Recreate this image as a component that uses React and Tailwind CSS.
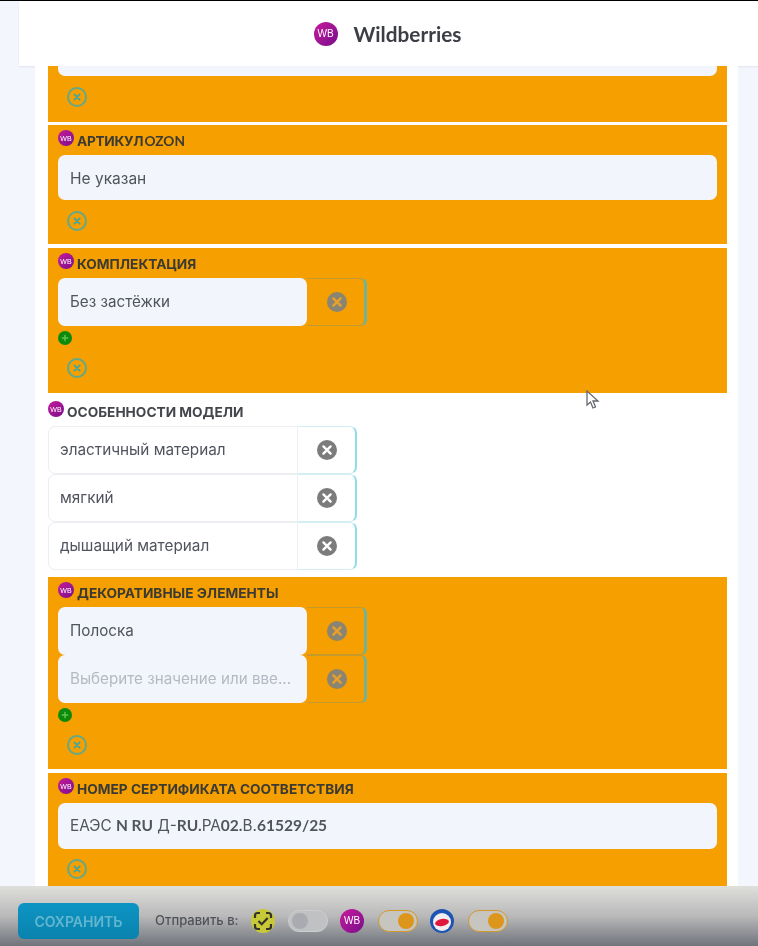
import React from "react";

function WbIcon({ size = 16, fs = 7 }) {
  return (
    <span
      className="inline-flex shrink-0 items-center justify-center rounded-full bg-gradient-to-br from-[#c8189a] to-[#7a0a8c] font-['Liberation_Sans',sans-serif] font-normal text-white"
      style={{ width: size, height: size, fontSize: fs, lineHeight: 1 }}
    >
      WB
    </span>
  );
}

function RoundX({ size = 20, circle = "#7c7c7c", x = "#ffffff" }) {
  return (
    <svg width={size} height={size} viewBox="0 0 20 20" className="shrink-0">
      <circle cx="10" cy="10" r="10" fill={circle} />
      <path d="M6.4 6.4 13.6 13.6M13.6 6.4 6.4 13.6" stroke={x} strokeWidth="2.4" strokeLinecap="round" />
    </svg>
  );
}

function RingX() {
  return (
    <svg width="20" height="20" viewBox="0 0 20 20" className="block shrink-0">
      <circle cx="10" cy="10" r="9" fill="none" stroke="#62a98a" strokeWidth="2" />
      <path d="M7.4 7.4 12.6 12.6M12.6 7.4 7.4 12.6" stroke="#3fa6a0" strokeWidth="1.8" strokeLinecap="round" />
    </svg>
  );
}

function Plus() {
  return (
    <svg width="14" height="14" viewBox="0 0 14 14" className="block">
      <circle cx="7" cy="7" r="7" fill="#0b8a0b" />
      <path d="M7 3.8v6.4M3.8 7h6.4" stroke="#5fc24d" strokeWidth="1.5" />
    </svg>
  );
}

function Title({ children, dark }) {
  return (
    <div className={`flex h-[18px] items-start ${dark ? "text-[#3c3b33]" : "text-[#44464c]"}`}>
      <span className="-mt-[2px] flex">
        <WbIcon size={16} fs={7} />
      </span>
      <span className="ml-[3px] whitespace-nowrap text-[13.700px] font-bold uppercase leading-[18px]">{children}</span>
    </div>
  );
}

function OrangeRow({ children, placeholder }) {
  return (
    <div className="flex h-[48px]">
      <div
        className={`flex w-[249px] items-center whitespace-nowrap rounded-[7px] bg-[#f2f5fb] pl-[12px] pt-[1px] text-[15.200px] ${
          placeholder ? "text-[#b4b9c4]" : "text-[#50545e]"
        }`}
      >
        {children}
      </div>
      <div className="flex w-[60px] items-center justify-center rounded-r-[6px] border-y border-r-[3px] border-y-[#c59a2c] border-r-[#72b393] pb-[1px] pl-[2px]">
        <RoundX circle="#8a8473" x="#e9a12a" />
      </div>
    </div>
  );
}

function WhiteRow({ children }) {
  return (
    <div className="flex h-[48px]">
      <div className="flex w-[250px] items-center rounded-l-[7px] border-[1.5px] border-[#eceef1] pl-[11px] pt-[1px] text-[15.300px] text-[#50545e]">
        {children}
      </div>
      <div className="flex w-[59px] items-center justify-center rounded-r-[7px] border-y-[1.5px] border-r-2 border-y-[#d3eff3] border-r-[#8fdbe8]">
        <RoundX />
      </div>
    </div>
  );
}

function Section({ children, className }) {
  return <section className={`bg-[#f59f00] ${className}`}>{children}</section>;
}

function Toggle({ on }) {
  return (
    <span
      className={`flex h-[22px] w-[40px] items-center rounded-full border ${
        on ? "justify-end border-[#d39a2a] bg-[#c6c5c0] pr-[3px]" : "justify-start border-[#cdced0] bg-[#c0c1c3] pl-[3px]"
      }`}
    >
      <span className={`block size-[16px] rounded-full ${on ? "bg-[#dc961c]" : "bg-[#a9abb0]"}`} />
    </span>
  );
}

const Lat = ({ children }) => <span className="-ml-[2px] font-['Lato',sans-serif] font-bold">{children}</span>;
const CertBold = ({ children }) => <b className="font-['Lato',sans-serif] text-[15.500px] font-bold">{children}</b>;

export default function App() {
  return (
    <div className="relative flex h-[946px] w-[758px] flex-col overflow-hidden bg-[#f3f6fd] font-['Inter',sans-serif] blur-[0.6px]">
      <div className="h-px shrink-0 bg-black" />
      <header className="ml-[19px] flex h-[65px] shrink-0 items-center justify-center gap-[16px] bg-white pr-[2px] shadow-[0_1px_2px_rgba(0,0,0,0.08)]">
        <WbIcon size={24} fs={10} />
        <span className="font-['Lato',sans-serif] text-[20.800px] font-bold text-[#3b3f45]">Wildberries</span>
      </header>

      <main className="ml-[35px] mr-[20px] min-h-0 flex-1 overflow-hidden bg-white pl-[13px] pr-[11px]">
        <Section className="h-[56px] px-[10px]">
          <div className="h-[10px] rounded-b-[7px] bg-[#f2f5fb]" />
          <div className="ml-[9px] mt-[11px]"><RingX /></div>
        </Section>

        <Section className="mt-[3px] h-[119px] px-[10px] pt-[7px]">
          <Title dark><span className="tracking-[-0.3px]">Артикул</span> <Lat>Ozon</Lat></Title>
          <div className="mt-[5px] flex h-[45px] items-center rounded-[7px] bg-[#f2f5fb] pl-[12px] pt-[2px] text-[15.500px] text-[#50545e]">Не указан</div>
          <div className="ml-[9px] mt-[11px]"><RingX /></div>
        </Section>

        <Section className="mt-[4px] h-[145px] px-[10px] pt-[7px]">
          <Title dark>Комплектация</Title>
          <div className="mt-[5px]">
            <OrangeRow>Без застёжки</OrangeRow>
          </div>
          <div className="mt-[5px]"><Plus /></div>
          <div className="ml-[9px] mt-[13px]"><RingX /></div>
        </Section>

        <section className="h-[184px] pt-[10px]">
          <Title>Особенности модели</Title>
          <div className="mt-[5px] flex flex-col">
            <WhiteRow>эластичный материал</WhiteRow>
            <WhiteRow>мягкий</WhiteRow>
            <WhiteRow>дышащий материал</WhiteRow>
          </div>
        </section>

        <Section className="h-[192px] px-[10px] pt-[7px]">
          <Title dark>Декоративные элементы</Title>
          <div className="mt-[5px] flex flex-col">
            <OrangeRow>Полоска</OrangeRow>
            <OrangeRow placeholder>Выберите значение или вве...</OrangeRow>
          </div>
          <div className="mt-[5px]"><Plus /></div>
          <div className="ml-[9px] mt-[13px]"><RingX /></div>
        </Section>

        <Section className="mt-[4px] h-[120px] px-[10px] pt-[7px]">
          <Title dark>Номер сертификата соответствия</Title>
          <div className="mt-[5px] flex h-[46px] items-center whitespace-pre rounded-[7px] bg-[#f2f5fb] pl-[12px] text-[15.300px] text-[#50545e]">
            ЕАЭС <CertBold>N RU</CertBold> Д-<CertBold>RU.</CertBold>РА<CertBold>02.</CertBold>В.<CertBold>61529/25</CertBold>
          </div>
          <div className="ml-[9px] mt-[10px]"><RingX /></div>
        </Section>
      </main>

      <footer className="flex h-[60px] shrink-0 items-center bg-gradient-to-b from-[#dfdfdb] via-[#b9b9ba] to-[#70747b] pl-[18px] pt-[10px]">
        <button className="flex h-[36px] w-[121px] items-center justify-center rounded-[6px] bg-gradient-to-b from-[#0d95c4] to-[#0a82ae] text-[14px] font-semibold text-[#62b6cf]">
          СОХРАНИТЬ
        </button>
        <span className="ml-[16px] w-[85px] whitespace-nowrap text-[13px] font-medium text-[#4f5257]">Отправить в:</span>
        <svg width="24" height="24" viewBox="0 0 24 24" className="ml-[11px] shrink-0">
          <circle cx="12" cy="12" r="12" fill="#c7c938" />
          <path d="M4 9V6.500A2.500 2.500 0 0 1 6.500 4H9M15 4h2.500A2.500 2.500 0 0 1 20 6.500V9M20 15v2.500a2.500 2.500 0 0 1-2.500 2.500H15M9 20H6.500A2.500 2.500 0 0 1 4 17.500V15" fill="none" stroke="#34342a" strokeWidth="2.2" />
          <path d="M7.500 12l3.200 3.200 6-6.200" fill="none" stroke="#34342a" strokeWidth="2.2" />
        </svg>
        <span className="ml-[13px]"><Toggle /></span>
        <span className="ml-[12px] flex"><WbIcon size={24} fs={10} /></span>
        <span className="ml-[14px]"><Toggle on /></span>
        <svg width="24" height="24" viewBox="0 0 24 24" className="ml-[12px] shrink-0">
          <circle cx="12" cy="12" r="12" fill="#1d54b4" />
          <circle cx="12" cy="13" r="9" fill="#f1eef0" />
          <ellipse cx="12" cy="13.500" rx="7" ry="3.500" fill="#e0173c" transform="rotate(-10 12 13.500)" />
        </svg>
        <span className="ml-[14px]"><Toggle on /></span>
      </footer>

      <svg width="14" height="20" viewBox="0 0 14 20" className="absolute left-[586px] top-[390px]">
        <path d="M1 1v14l3.500-3 2.500 6 2.500-1-2.500-6h5z" fill="#fff" stroke="#66696e" strokeWidth="1.300" />
      </svg>
    </div>
  );
}
